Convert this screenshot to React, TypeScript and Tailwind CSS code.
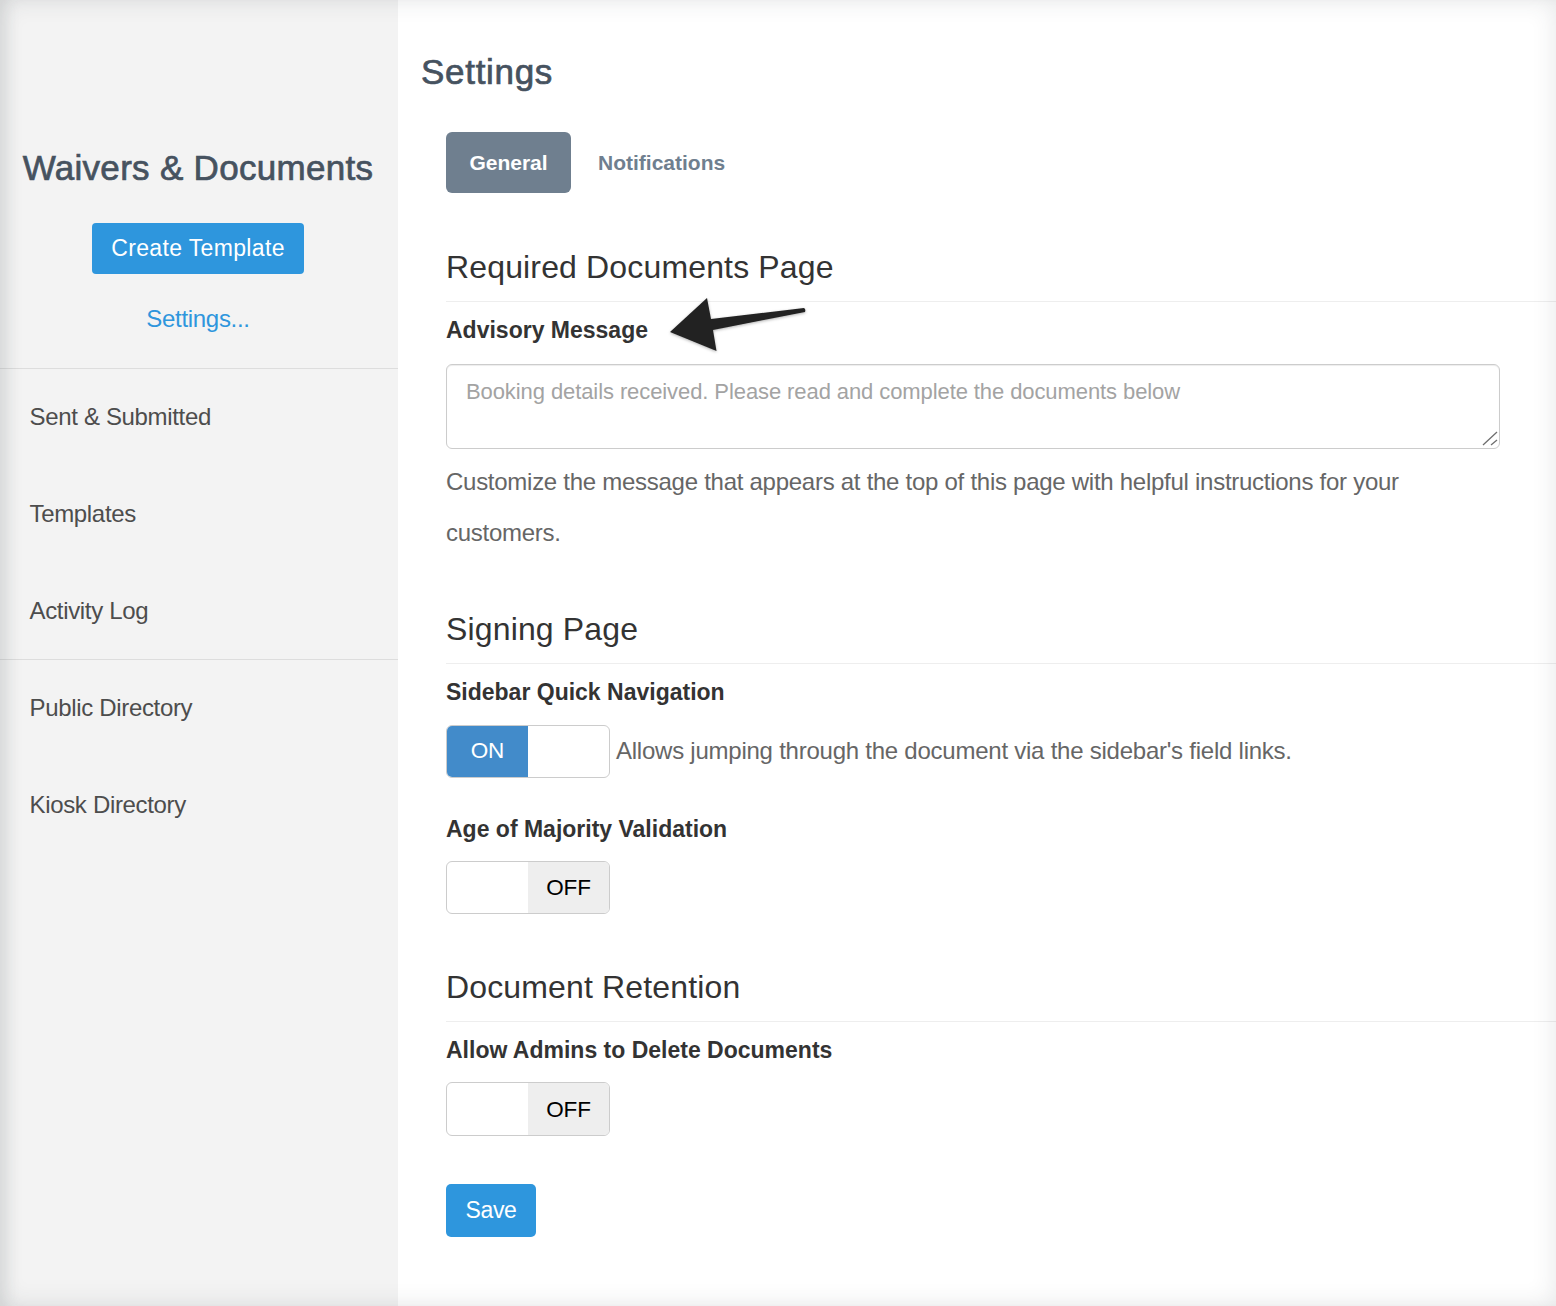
import React from "react";

const navTop = ["Sent & Submitted", "Templates", "Activity Log"];
const navBottom = ["Public Directory", "Kiosk Directory"];

const Toggle = ({ on }: { on: boolean }) => (
  <div className="flex h-full w-[164px] shrink-0 overflow-hidden rounded-[6px] border border-[#cccccc] bg-white text-[22.500px] leading-none tracking-[-0.2px]">
    {on ? (
      <>
        <div className="flex w-[81px] items-center justify-center bg-[#428bca] text-white">ON</div>
        <div className="flex-1" />
      </>
    ) : (
      <>
        <div className="w-[81px]" />
        <div className="flex flex-1 items-center justify-center bg-[#eeeeee] pt-[2px] text-black">OFF</div>
      </>
    )}
  </div>
);

const SectionTitle = ({ children }: { children: React.ReactNode }) => (
  <h2 className="flex h-[53px] items-end border-b border-[#eeeeee] pb-[18px] text-[32px] leading-none tracking-[0.15px] text-[#333333]">
    {children}
  </h2>
);

const FieldLabel = ({ children }: { children: React.ReactNode }) => (
  <div className="text-[23px] font-bold leading-[28px] text-[#333333]">{children}</div>
);

const NavRow = ({ label }: { label: string }) => (
  <div className="flex h-[97px] items-center pb-[2px] pl-[29.500px] leading-none tracking-[-0.33px] text-[#4d4d4d]">{label}</div>
);

export default function App() {
  return (
    <div className="relative flex h-[1306px] w-[1556px] overflow-hidden bg-white font-['Liberation_Sans',Arial,sans-serif] text-[24px]">
      <aside className="w-[398px] shrink-0 bg-[#f3f3f3] pt-[146px]">
        <div className="pr-[2px]">
          <h1 className="text-center text-[35px] leading-[44px] tracking-[0.3px] text-[#46525f] [-webkit-text-stroke:0.7px_#46525f]">
            Waivers &amp; Documents
          </h1>
          <div className="mt-[33px] flex justify-center">
            <button className="flex h-[51px] w-[212px] items-center justify-center rounded-[4px] bg-[#2e96dd] text-[23px] tracking-[0.35px] text-white">
              Create Template
            </button>
          </div>
          <div className="mt-[31px] text-center text-[24px] leading-[28px] tracking-[-0.3px] text-[#2e96dd]">Settings...</div>
        </div>
        <div className="mt-[35px] border-t border-[#dddddd]">
          {navTop.map((n) => (
            <NavRow key={n} label={n} />
          ))}
        </div>
        <div className="-mt-px border-t border-[#dddddd]">
          {navBottom.map((n) => (
            <NavRow key={n} label={n} />
          ))}
        </div>
      </aside>

      <main className="flex-1 pt-[50px]">
        <div className="ml-[23px] text-[35px] leading-[44px] tracking-[0.7px] text-[#46525f] [-webkit-text-stroke:0.7px_#46525f]">Settings</div>

        <div className="ml-[48px] mt-[38px]">
          <div className="flex items-center">
            <div className="flex h-[61px] w-[125px] items-center justify-center rounded-[6px] bg-[#6f7f8f] text-[21px] font-bold text-white">
              General
            </div>
            <div className="ml-[27px] text-[21px] font-bold text-[#6f7f8f]">Notifications</div>
          </div>

          <div className="mt-[56px]">
            <SectionTitle>Required Documents Page</SectionTitle>
          </div>
          <div className="mt-[14px]">
            <FieldLabel>Advisory Message</FieldLabel>
          </div>
          <textarea
            readOnly
            placeholder="Booking details received. Please read and complete the documents below"
            className="mt-[20px] block h-[85px] w-[1054px] resize-none rounded-[6px] border border-[#cccccc] bg-white px-[19px] py-[11px] text-[22px] leading-[32px] tracking-[-0.09px] shadow-[inset_0_1px_1px_rgba(0,0,0,0.075)] outline-none placeholder:text-[#a3a3a3]"
          />
          <p className="mt-[7px] w-[1054px] text-[24px] leading-[51px] tracking-[-0.27px] text-[#666666]">
            Customize the message that appears at the top of this page with helpful instructions for your customers.
          </p>

          <div className="mt-[53px]">
            <SectionTitle>Signing Page</SectionTitle>
          </div>
          <div className="mt-[14px]">
            <FieldLabel>Sidebar Quick Navigation</FieldLabel>
          </div>
          <div className="mt-[19px] flex h-[53px] items-center">
            <Toggle on />
            <span className="ml-[6px] pb-[2px] tracking-[-0.24px] text-[#666666]">Allows jumping through the document via the sidebar's field links.</span>
          </div>
          <div className="mt-[37px]">
            <FieldLabel>Age of Majority Validation</FieldLabel>
          </div>
          <div className="mt-[18px] h-[53px]">
            <Toggle on={false} />
          </div>

          <div className="mt-[55px]">
            <SectionTitle>Document Retention</SectionTitle>
          </div>
          <div className="mt-[14px]">
            <FieldLabel>Allow Admins to Delete Documents</FieldLabel>
          </div>
          <div className="mt-[18px] h-[54px]">
            <Toggle on={false} />
          </div>
          <button className="mt-[48px] flex h-[53px] w-[90px] items-center justify-center rounded-[5px] bg-[#2e96dd] text-[23px] tracking-[-0.3px] text-white">
            Save
          </button>
        </div>
      </main>

      {/* annotation arrow */}
      <svg className="pointer-events-none absolute left-[660px] top-[290px]" width="155" height="70" viewBox="660 290 155 70">
        <defs>
          <filter id="arrowShadow" x="-10%" y="-20%" width="120%" height="140%">
            <feDropShadow dx="0" dy="1" stdDeviation="1.500" floodColor="#000" floodOpacity="0.3" />
          </filter>
        </defs>
        <path
          d="M670 332 L707 298 L711 319 L804 308 Q806 309 805 312 L713 330 L716.500 351 Z"
          fill="#222222"
          filter="url(#arrowShadow)"
        />
      </svg>

      {/* textarea resize grip */}
      <svg className="pointer-events-none absolute left-[1482px] top-[431px]" width="16" height="16" viewBox="0 0 16 16">
        <path d="M1 14 L15 1 M9 14 L15 9" stroke="#6f6f6f" strokeWidth="1.300" fill="none" />
      </svg>

      {/* soft window edge */}
      <div className="pointer-events-none absolute inset-0 shadow-[inset_0_0_24px_rgba(40,50,60,0.12),inset_14px_0_14px_-6px_rgba(40,50,60,0.07)]" />
    </div>
  );
}
